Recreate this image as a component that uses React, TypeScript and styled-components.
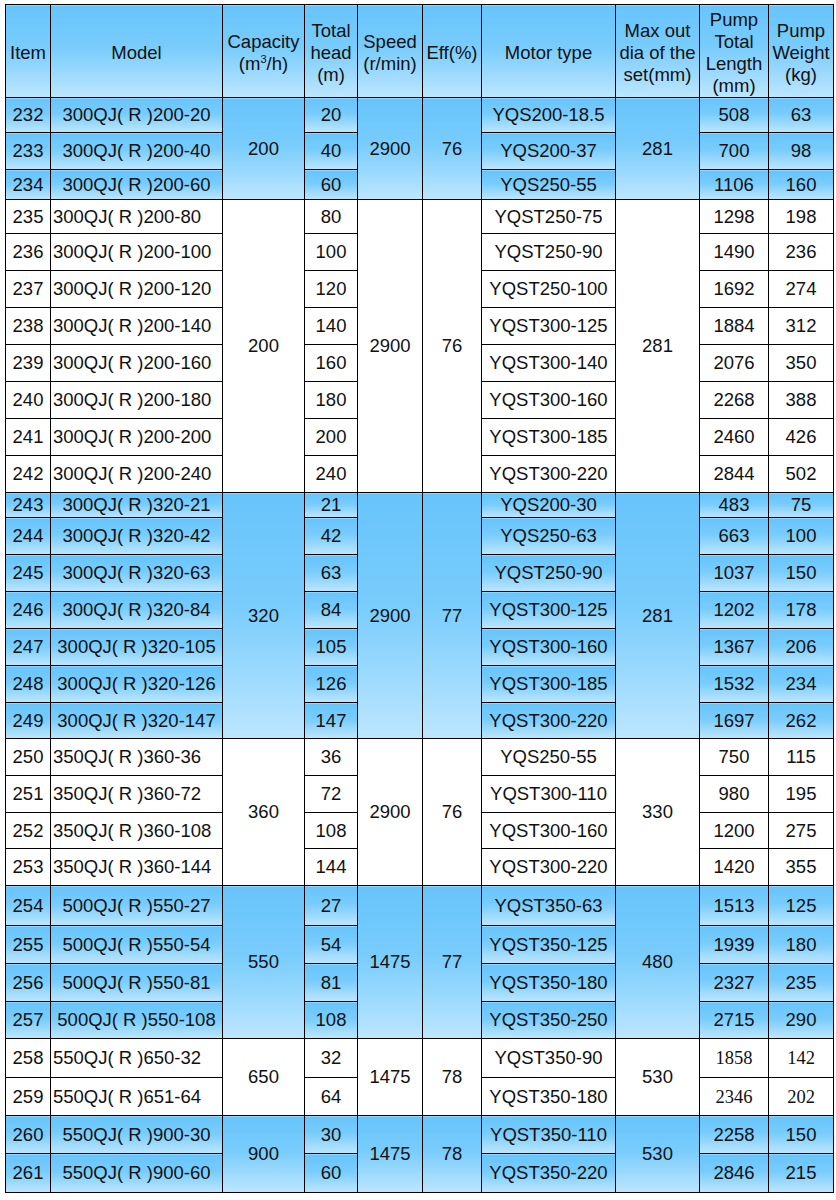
import React from "react";
import styled, { createGlobalStyle, css } from "styled-components";

const GlobalStyle = createGlobalStyle`
  html, body { margin: 0; padding: 0; background: #ffffff; }
  body { font-family: "Liberation Sans", Arial, sans-serif; color: #111; }
`;

const blueFill = css`
  background: linear-gradient(180deg, #67c4fb 0%, #78ccfc 45%, #bde6ff 100%);
`;

const Page = styled.div`
  padding: 4px 0 0 5px;
  width: 836px;
  box-sizing: border-box;
`;

const Table = styled.table`
  border-collapse: collapse;
  table-layout: fixed;
  width: 828px;
  border: 1px solid #6f7b84;
  font-size: 18.5px;
`;

const HeadCell = styled.th<{ $gray?: boolean }>`
  ${blueFill};
  border: 1px solid #000;
  ${(p) => p.$gray && "border-left-color: #6f7f8a;"}
  font-weight: normal;
  line-height: 22px;
  padding: 4px 0 0 0;
  text-align: center;
  vertical-align: middle;
  white-space: nowrap;
  color: #111;
`;

const Sup = styled.sup`
  font-size: 0.6em;
  line-height: 0;
`;

const Row = styled.tr<{ $h: number }>`
  height: ${(p) => p.$h}px;
`;

const Cell = styled.td<{
  $blue: boolean;
  $left?: boolean;
  $gray?: boolean;
  $serif?: boolean;
}>`
  ${(p) => (p.$blue ? blueFill : "background: #ffffff;")}
  border: 1px solid #000;
  ${(p) => p.$gray && "border-left-color: #6f7f8a;"}
  padding: ${(p) => (p.$left ? "0 0 0 2px" : "0")};
  text-align: ${(p) => (p.$left ? "left" : "center")};
  vertical-align: middle;
  white-space: nowrap;
  line-height: 20px;
  font-family: ${(p) =>
    p.$serif ? '"Liberation Serif", "Times New Roman", serif' : "inherit"};
  color: #111;
`;

type Item = [number, string, string, string, string, string];
type Group = {
  blue: boolean;
  cap: string;
  speed: string;
  eff: string;
  dia: string;
  serifTail?: boolean;
  rows: Item[];
  heights: number[];
};

const groups: Group[] = [
  {
    blue: true, cap: "200", speed: "2900", eff: "76", dia: "281",
    heights: [35, 37, 30],
    rows: [
      [232, "300QJ( R )200-20", "20", "YQS200-18.5", "508", "63"],
      [233, "300QJ( R )200-40", "40", "YQS200-37", "700", "98"],
      [234, "300QJ( R )200-60", "60", "YQS250-55", "1106", "160"],
    ],
  },
  {
    blue: false, cap: "200", speed: "2900", eff: "76", dia: "281",
    heights: [34, 37, 37, 37, 37, 37, 37, 37],
    rows: [
      [235, "300QJ( R )200-80", "80", "YQST250-75", "1298", "198"],
      [236, "300QJ( R )200-100", "100", "YQST250-90", "1490", "236"],
      [237, "300QJ( R )200-120", "120", "YQST250-100", "1692", "274"],
      [238, "300QJ( R )200-140", "140", "YQST300-125", "1884", "312"],
      [239, "300QJ( R )200-160", "160", "YQST300-140", "2076", "350"],
      [240, "300QJ( R )200-180", "180", "YQST300-160", "2268", "388"],
      [241, "300QJ( R )200-200", "200", "YQST300-185", "2460", "426"],
      [242, "300QJ( R )200-240", "240", "YQST300-220", "2844", "502"],
    ],
  },
  {
    blue: true, cap: "320", speed: "2900", eff: "77", dia: "281",
    heights: [25, 37, 37, 37, 37, 37, 36],
    rows: [
      [243, "300QJ( R )320-21", "21", "YQS200-30", "483", "75"],
      [244, "300QJ( R )320-42", "42", "YQS250-63", "663", "100"],
      [245, "300QJ( R )320-63", "63", "YQST250-90", "1037", "150"],
      [246, "300QJ( R )320-84", "84", "YQST300-125", "1202", "178"],
      [247, "300QJ( R )320-105", "105", "YQST300-160", "1367", "206"],
      [248, "300QJ( R )320-126", "126", "YQST300-185", "1532", "234"],
      [249, "300QJ( R )320-147", "147", "YQST300-220", "1697", "262"],
    ],
  },
  {
    blue: false, cap: "360", speed: "2900", eff: "76", dia: "330",
    heights: [37, 37, 36, 37],
    rows: [
      [250, "350QJ( R )360-36", "36", "YQS250-55", "750", "115"],
      [251, "350QJ( R )360-72", "72", "YQST300-110", "980", "195"],
      [252, "350QJ( R )360-108", "108", "YQST300-160", "1200", "275"],
      [253, "350QJ( R )360-144", "144", "YQST300-220", "1420", "355"],
    ],
  },
  {
    blue: true, cap: "550", speed: "1475", eff: "77", dia: "480",
    heights: [40, 38, 38, 37],
    rows: [
      [254, "500QJ( R )550-27", "27", "YQST350-63", "1513", "125"],
      [255, "500QJ( R )550-54", "54", "YQST350-125", "1939", "180"],
      [256, "500QJ( R )550-81", "81", "YQST350-180", "2327", "235"],
      [257, "500QJ( R )550-108", "108", "YQST350-250", "2715", "290"],
    ],
  },
  {
    blue: false, cap: "650", speed: "1475", eff: "78", dia: "530",
    serifTail: true,
    heights: [39, 38],
    rows: [
      [258, "550QJ( R )650-32", "32", "YQST350-90", "1858", "142"],
      [259, "550QJ( R )651-64", "64", "YQST350-180", "2346", "202"],
    ],
  },
  {
    blue: true, cap: "900", speed: "1475", eff: "78", dia: "530",
    heights: [38, 39],
    rows: [
      [260, "550QJ( R )900-30", "30", "YQST350-110", "2258", "150"],
      [261, "550QJ( R )900-60", "60", "YQST350-220", "2846", "215"],
    ],
  },
];

const widths = [45, 172, 82, 53, 65, 59, 134, 84, 69, 65];

export default function App() {
  return (
    <>
      <GlobalStyle />
      <Page>
        <Table>
          <colgroup>
            {widths.map((w, i) => (
              <col key={i} width={w} />
            ))}
          </colgroup>
          <thead>
            <Row $h={93}>
              <HeadCell>Item</HeadCell>
              <HeadCell>Model</HeadCell>
              <HeadCell>
                Capacity
                <br />
                (m<Sup>3</Sup>/h)
              </HeadCell>
              <HeadCell>
                Total
                <br />
                head
                <br />
                (m)
              </HeadCell>
              <HeadCell>
                Speed
                <br />
                (r/min)
              </HeadCell>
              <HeadCell $gray>Eff(%)</HeadCell>
              <HeadCell>Motor type</HeadCell>
              <HeadCell>
                Max out
                <br />
                dia of the
                <br />
                set(mm)
              </HeadCell>
              <HeadCell>
                Pump
                <br />
                Total
                <br />
                Length
                <br />
                (mm)
              </HeadCell>
              <HeadCell $gray>
                Pump
                <br />
                Weight
                <br />
                (kg)
              </HeadCell>
            </Row>
          </thead>
          <tbody>
            {groups.map((g) =>
              g.rows.map((r, i) => {
                const n = g.rows.length;
                return (
                  <Row key={r[0]} $h={g.heights[i]}>
                    <Cell $blue={g.blue}>{r[0]}</Cell>
                    <Cell $blue={g.blue} $left={!g.blue}>
                      {r[1]}
                    </Cell>
                    {i === 0 && (
                      <Cell $blue={g.blue} rowSpan={n}>
                        {g.cap}
                      </Cell>
                    )}
                    <Cell $blue={g.blue}>{r[2]}</Cell>
                    {i === 0 && (
                      <>
                        <Cell $blue={g.blue} rowSpan={n}>
                          {g.speed}
                        </Cell>
                        <Cell $blue={g.blue} $gray rowSpan={n}>
                          {g.eff}
                        </Cell>
                      </>
                    )}
                    <Cell $blue={g.blue}>{r[3]}</Cell>
                    {i === 0 && (
                      <Cell $blue={g.blue} rowSpan={n}>
                        {g.dia}
                      </Cell>
                    )}
                    <Cell $blue={g.blue} $serif={g.serifTail}>
                      {r[4]}
                    </Cell>
                    <Cell $blue={g.blue} $gray $serif={g.serifTail}>
                      {r[5]}
                    </Cell>
                  </Row>
                );
              })
            )}
          </tbody>
        </Table>
      </Page>
    </>
  );
}
